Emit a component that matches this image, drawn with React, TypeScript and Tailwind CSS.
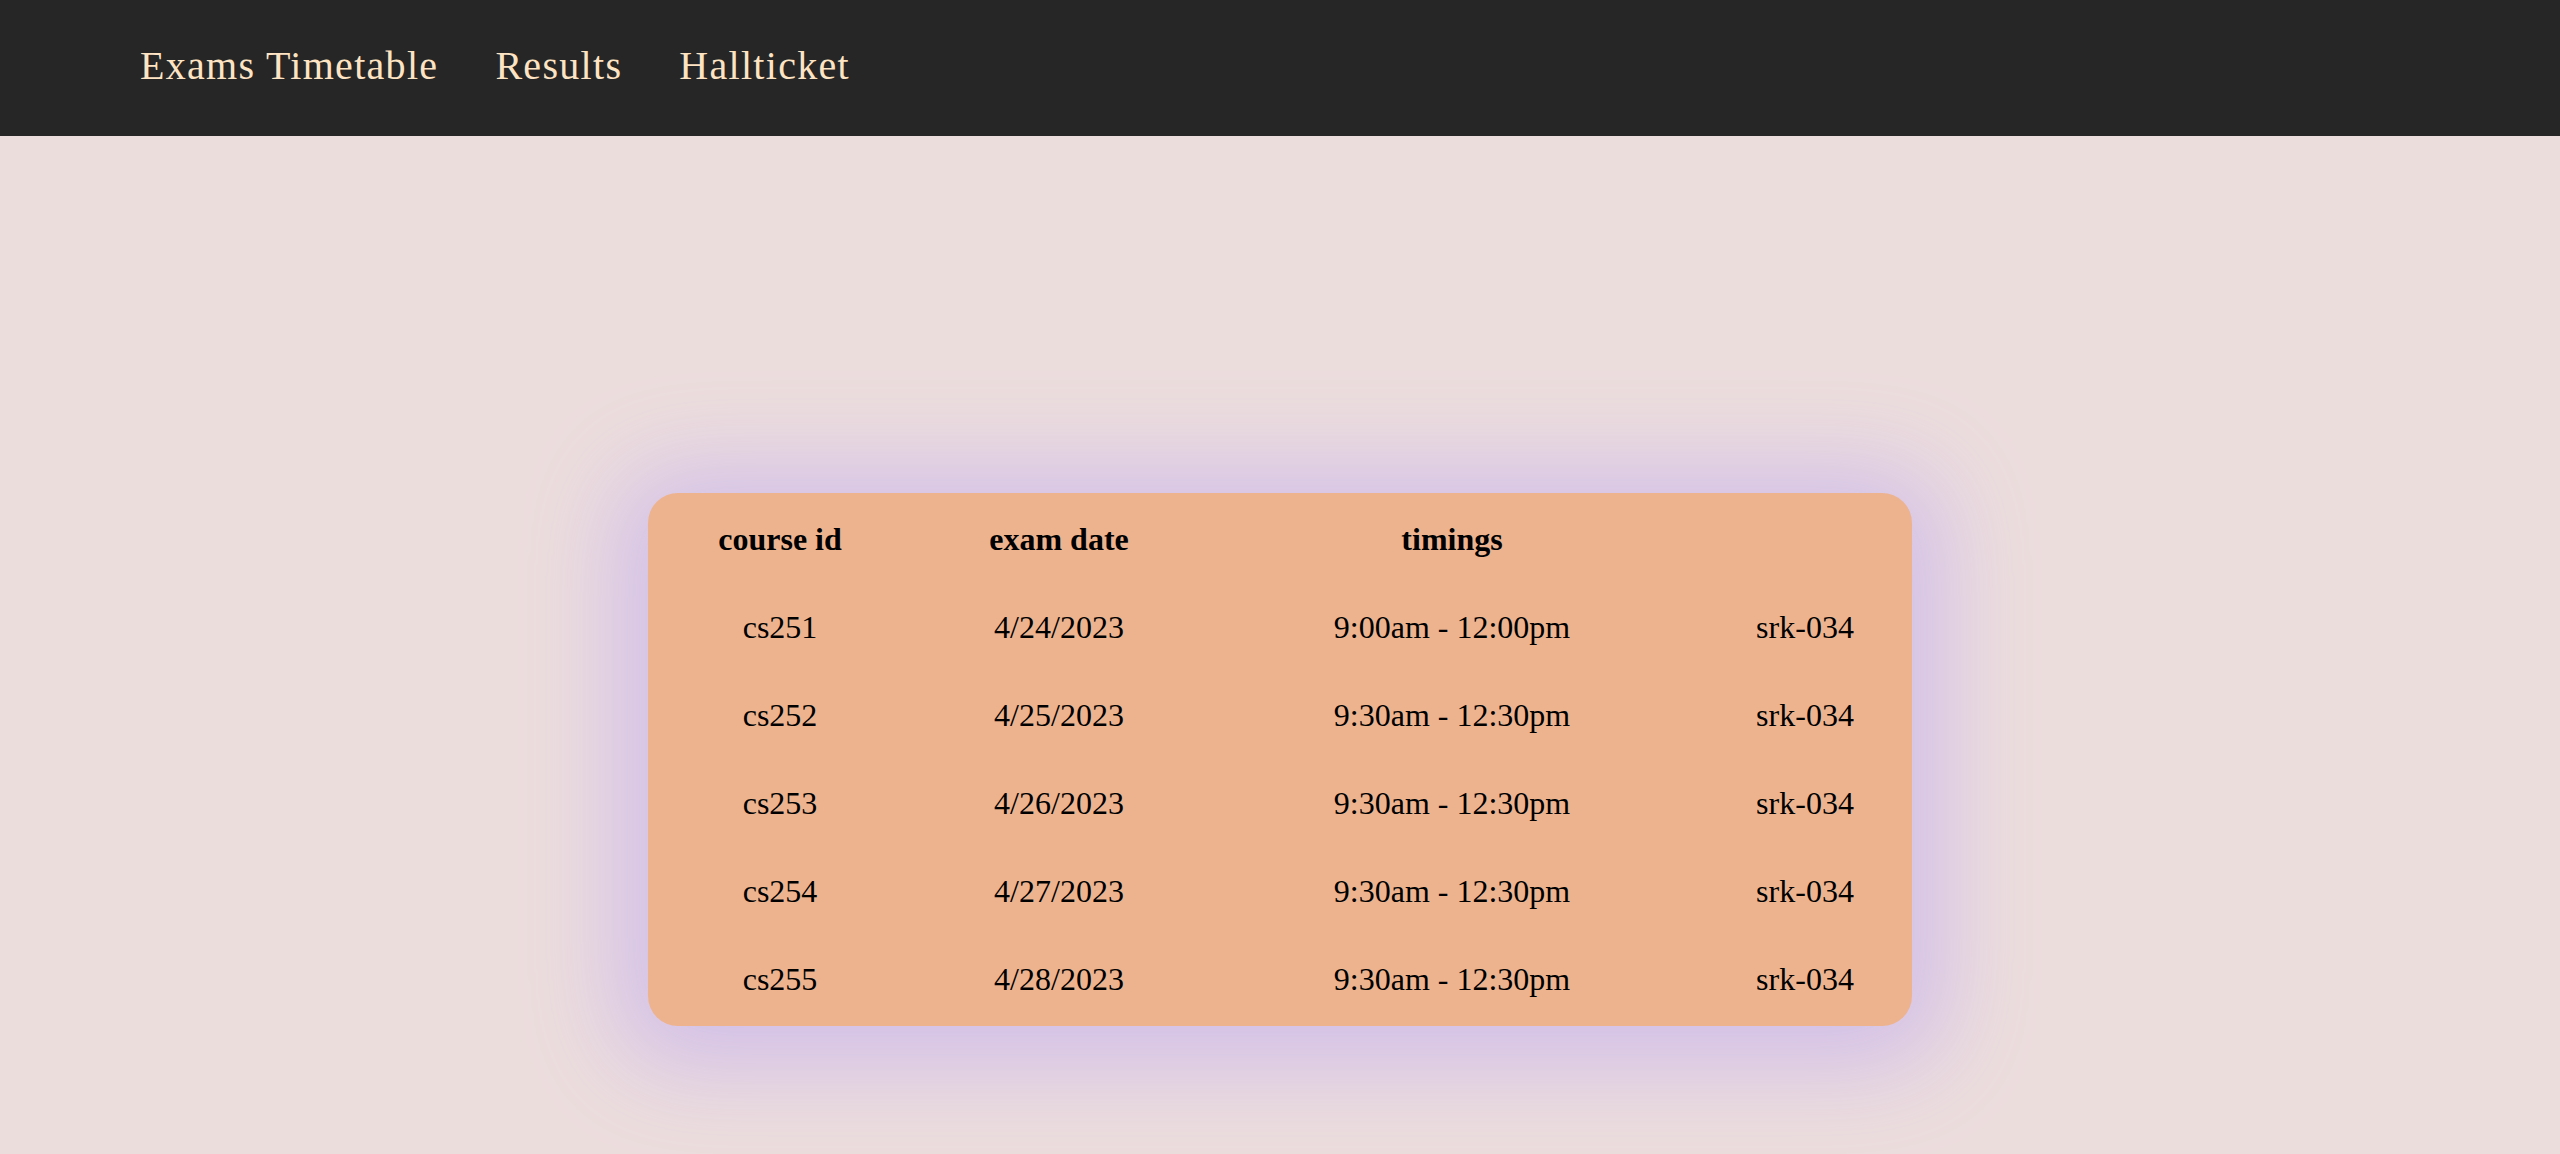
import React from 'react';

type Exam = {
  course: string;
  date: string;
  time: string;
  room: string;
};

const exams: Exam[] = [
  { course: 'cs251', date: '4/24/2023', time: '9:00am - 12:00pm', room: 'srk-034' },
  { course: 'cs252', date: '4/25/2023', time: '9:30am - 12:30pm', room: 'srk-034' },
  { course: 'cs253', date: '4/26/2023', time: '9:30am - 12:30pm', room: 'srk-034' },
  { course: 'cs254', date: '4/27/2023', time: '9:30am - 12:30pm', room: 'srk-034' },
  { course: 'cs255', date: '4/28/2023', time: '9:30am - 12:30pm', room: 'srk-034' },
];

const cols = 'grid grid-cols-[264px_294px_492px_214px] h-[88px] items-center text-center';

const App: React.FC = () => {
  return (
    <div className="min-h-[1154px] bg-[#ecdddd] font-['Liberation_Serif',serif] text-black">
      {/* Top navigation */}
      <nav className="h-[136px] bg-[#262626] flex items-center pl-[140px] pb-[4px]">
        <ul className="flex gap-[57px] text-[40px] tracking-[1.3px] text-[#ffe4c4]">
          <li><a href="#">Exams Timetable</a></li>
          <li><a href="#">Results</a></li>
          <li><a href="#">Hallticket</a></li>
        </ul>
      </nav>

      {/* Timetable card */}
      <div className="w-[1264px] mx-auto mt-[357px] bg-[#edb38f] rounded-[30px] pt-[2px] pb-[3px] text-[32px] shadow-[0_8px_90px_30px_rgba(205,185,235,0.85)]">
        <div className={`${cols} font-bold`}>
          <div>course id</div>
          <div>exam date</div>
          <div>timings</div>
          <div></div>
        </div>
        {exams.map((e) => (
          <div key={e.course} className={cols}>
            <div>{e.course}</div>
            <div>{e.date}</div>
            <div>{e.time}</div>
            <div>{e.room}</div>
          </div>
        ))}
      </div>
    </div>
  );
};

export default App;
